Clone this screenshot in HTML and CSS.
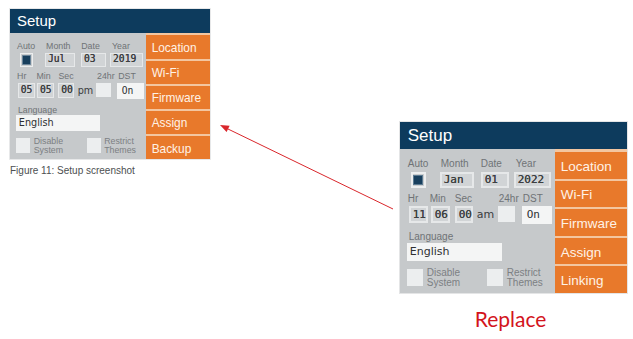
FILE: index.html
```html
<!DOCTYPE html>
<html lang="en">
<head>
  <meta charset="UTF-8" />
  <meta name="viewport" content="width=device-width, initial-scale=1.0"/>
  <title>Setup screen replace</title>
  <link rel="stylesheet" href="styles.css">
</head>
<body>

  <div class="slide">

    <figure class="figure-old">
      <div class="setup">
        <div class="setup-title">Setup</div>
        <div class="setup-body">
          <div class="setup-form">
            <div class="row row-date">
              <div class="cell"><span class="lbl">Auto</span><span class="check"><i></i></span></div>
              <div class="cell"><span class="lbl pad1">Month</span><span class="field w-month">Jul</span></div>
              <div class="cell"><span class="lbl">Date</span><span class="field w-date">03</span></div>
              <div class="cell"><span class="lbl pad2">Year</span><span class="field w-year">2019</span></div>
            </div>
            <div class="row row-time">
              <div class="cell"><span class="lbl">Hr</span><span class="field w-hr">05</span></div>
              <div class="cell"><span class="lbl">Min</span><span class="field w-hr">05</span></div>
              <div class="cell"><span class="lbl pad1">Sec</span><span class="sec-line"><span class="field w-sec">00</span><span class="ampm">pm</span></span></div>
              <div class="cell"><span class="lbl pad2">24hr</span><span class="box"></span></div>
              <div class="cell"><span class="lbl pad2">DST</span><span class="field white w-dst">On</span></div>
            </div>
            <span class="lbl pad1 lang-lbl">Language</span>
            <span class="field white w-lang">English</span>
            <div class="opts">
              <div class="opt"><span class="opt-box"></span><span class="opt-text">Disable<br>System</span></div>
              <div class="opt"><span class="opt-box"></span><span class="opt-text">Restrict<br>Themes</span></div>
            </div>
          </div>
          <div class="tabs">
            <div class="tab">Location</div>
            <div class="tab">Wi-Fi</div>
            <div class="tab">Firmware</div>
            <div class="tab">Assign</div>
            <div class="tab">Backup</div>
          </div>
        </div>
      </div>
      <figcaption>Figure 11: Setup screenshot</figcaption>
    </figure>

    <div class="figure-new">
      <div class="setup">
        <div class="setup-title">Setup</div>
        <div class="setup-body">
          <div class="setup-form">
            <div class="row row-date">
              <div class="cell"><span class="lbl">Auto</span><span class="check"><i></i></span></div>
              <div class="cell"><span class="lbl pad1">Month</span><span class="field w-month">Jan</span></div>
              <div class="cell"><span class="lbl">Date</span><span class="field w-date">01</span></div>
              <div class="cell"><span class="lbl pad2">Year</span><span class="field w-year">2022</span></div>
            </div>
            <div class="row row-time">
              <div class="cell"><span class="lbl">Hr</span><span class="field w-hr">11</span></div>
              <div class="cell"><span class="lbl">Min</span><span class="field w-hr">06</span></div>
              <div class="cell"><span class="lbl pad1">Sec</span><span class="sec-line"><span class="field w-sec">00</span><span class="ampm">am</span></span></div>
              <div class="cell"><span class="lbl pad2">24hr</span><span class="box"></span></div>
              <div class="cell"><span class="lbl pad2">DST</span><span class="field white w-dst">On</span></div>
            </div>
            <span class="lbl pad1 lang-lbl">Language</span>
            <span class="field white w-lang">English</span>
            <div class="opts">
              <div class="opt"><span class="opt-box"></span><span class="opt-text">Disable<br>System</span></div>
              <div class="opt"><span class="opt-box"></span><span class="opt-text">Restrict<br>Themes</span></div>
            </div>
          </div>
          <div class="tabs">
            <div class="tab">Location</div>
            <div class="tab">Wi-Fi</div>
            <div class="tab">Firmware</div>
            <div class="tab">Assign</div>
            <div class="tab">Linking</div>
          </div>
        </div>
      </div>
      <p class="replace">Replace</p>
    </div>

    <!-- arrow from the new screen to the old one -->
    <svg class="arrow" width="633" height="339" viewBox="0 0 633 339">
      <line x1="393" y1="209" x2="228" y2="129" stroke="#d9262b" stroke-width="1"/>
      <polygon points="220,125 229.6,125.8 226.6,132.1" fill="#d9262b"/>
    </svg>

  </div>

</body>
</html>
```

FILE: styles.css
```css
* {
  margin: 0;
  padding: 0;
  box-sizing: border-box;
}

body {
  background: #fff;
  font-family: 'Liberation Sans', Arial, sans-serif;
}

.slide {
  position: relative;
  width: 633px;
  height: 339px;
  display: flex;
  align-items: flex-start;
  padding: 9px 0 0 10px;
  overflow: hidden;
}

/* figures */

.figure-old .setup {
  zoom: 0.88;
}

.figure-old figcaption {
  margin-top: 6px;
  font-size: 10px;
  line-height: 12px;
  color: #4d4f51;
}

.figure-new {
  margin: 113px 0 0 190px;
}

.replace {
  margin: 14px 0 0 75px;
  font-family: 'Lato', sans-serif;
  font-size: 21px;
  line-height: 24px;
  color: #d3141c;
}

.arrow {
  position: absolute;
  top: 0;
  left: 0;
  pointer-events: none;
}

/* setup screen */

.setup {
  width: 227px;
  background: #c6c9cb;
  box-shadow: 0 0 0 1px #e4e5e6;
}

.setup-title {
  height: 27px;
  padding: 1px 0 0 8px;
  background: #0d3b5d;
  color: #fff;
  font-size: 17px;
  line-height: 26px;
}

.setup-body {
  display: flex;
  height: 144px;
}

.setup-form {
  flex: 1;
  min-width: 0;
  padding: 9px 0 0 8px;
}

.lbl {
  display: block;
  font-size: 10px;
  line-height: 12px;
  color: #6f7376;
  white-space: nowrap;
}

.pad1 { padding-left: 1px; }
.pad2 { padding-left: 2px; }

.row {
  display: grid;
}

.row-date {
  grid-template-columns: 32px 41px 33px 37px;
}

.row-time {
  grid-template-columns: 22px 24px 43px 24px 31px;
  margin-top: 5px;
}

.row-date .lbl {
  margin-bottom: 2px;
}

.row-time .lbl {
  margin-bottom: 1px;
}

.field {
  display: block;
  height: 16px;
  padding-left: 2px;
  border: 2px solid #e6e8e9;
  background: #d1d4d6;
  color: #3d3f41;
  font-family: 'DejaVu Sans Mono', monospace;
  font-size: 11px;
  line-height: 12px;
  text-shadow: 0 0 0.4px #3d3f41;
}

.row-time .field {
  height: 17px;
  line-height: 13px;
  margin-left: 1px;
}

.field.white {
  border: none;
  background: #f4f5f5;
  color: #2e3032;
  text-shadow: none;
}

.w-month { width: 34px; }
.w-date { width: 28px; }
.w-year { width: 37px; }
.w-hr { width: 19px; }
.w-sec { width: 18px; }

.row-time .w-dst {
  width: 30px;
  height: 18px;
  padding: 2px 0 0 5px;
}

.w-lang {
  width: 95px;
  height: 18px;
  margin-left: -1px;
  padding: 3px 0 0 3px;
  font-family: 'DejaVu Sans', sans-serif;
}

.check {
  display: flex;
  align-items: center;
  justify-content: center;
  width: 15px;
  height: 16px;
  margin: 2px 0 0 3px;
  border: 2px solid #eceeef;
  background: #c9ccce;
}

.check i {
  width: 8px;
  height: 8px;
  background: #173f5d;
  box-shadow: 0 0 0 1px #5c7a91;
}

.sec-line {
  display: flex;
  align-items: center;
  gap: 4px;
}

.ampm {
  font-family: 'DejaVu Sans', sans-serif;
  font-size: 11px;
  color: #3a3c3e;
}

.box {
  display: block;
  width: 17px;
  height: 16px;
  margin: 1px 0 0 1px;
  background: #eceeef;
}

.lang-lbl {
  margin-top: 7px;
}

.opts {
  display: flex;
  margin: 8px 0 0 -1px;
}

.opt {
  display: flex;
  gap: 4px;
}

.opt:first-child {
  width: 80px;
}

.opt-box {
  width: 16px;
  height: 17px;
  background: #eceeef;
}

.opt-text {
  margin-top: -1px;
  font-size: 10px;
  line-height: 10px;
  color: #7c8083;
}

/* orange menu */

.tabs {
  flex: none;
  width: 72px;
  display: flex;
  flex-direction: column;
  gap: 2px;
  padding-top: 3px;
  background: #f3c6a0;
}

.tab {
  flex: 1;
  display: flex;
  align-items: center;
  padding: 2px 0 0 6px;
  background: #e8792b;
  color: #fff2e6;
  font-size: 13.5px;
}
```
